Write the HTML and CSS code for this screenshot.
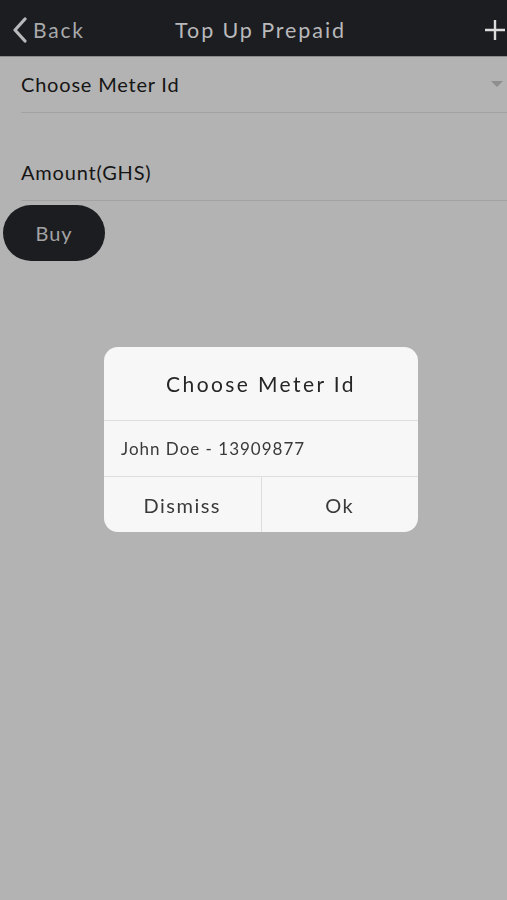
FILE: index.html
```html
<!DOCTYPE html>
<html lang="en">
<head>
  <meta charset="UTF-8">
  <meta name="viewport" content="width=device-width, initial-scale=1.0">
  <title>Top Up Prepaid</title>
  <link rel="stylesheet" href="styles.css">
</head>

<body>
  <header class="topbar">
    <div class="back">
      <svg width="16" height="26" viewBox="0 0 16 26"><path d="M13 2 L3 13 L13 24" fill="none" stroke="#b9b9bb" stroke-width="3.2" stroke-linecap="round" stroke-linejoin="round"/></svg>
      <span>Back</span>
    </div>
    <div class="title">Top Up Prepaid</div>
    <div class="plus">
      <svg width="22" height="22" viewBox="0 0 22 22"><path d="M11 1 V21 M1 11 H21" stroke="#dcdcdc" stroke-width="2.4"/></svg>
    </div>
  </header>

  <main class="form">
    <div class="field select">
      <span>Choose Meter Id</span>
      <span class="caret"></span>
    </div>
    <div class="field amount">
      <span>Amount(GHS)</span>
    </div>
    <button class="buy">Buy</button>
  </main>

  <div class="backdrop">
    <div class="dialog">
      <div class="dialog-title">Choose Meter Id</div>
      <div class="dialog-item">John Doe - 13909877</div>
      <div class="dialog-actions">
        <div class="action">Dismiss</div>
        <div class="action">Ok</div>
      </div>
    </div>
  </div>
</body>
</html>
```

FILE: styles.css
```css
body {
  margin: 0;
  background: #b3b3b3;
  font-family: Lato, "Open Sans", sans-serif;
  height: 900px;
  overflow: hidden;
}

.topbar {
  height: 57px;
  background: #1c1d21;
  border-bottom: 1px solid #8a8a8a;
  box-sizing: border-box;
  display: flex;
  align-items: center;
  padding: 0 0 0 12px;
}

.back {
  display: flex;
  align-items: center;
  gap: 5px;
  color: #a9a9ab;
  font-size: 21px;
  letter-spacing: 1.8px;
  width: 150px;
  padding-top: 3px;
}

.title {
  flex: 1;
  text-align: center;
  color: #b9b9bb;
  font-size: 21.5px;
  letter-spacing: 1.9px;
  padding-right: 123px;
  padding-top: 4px;
}

.plus {
  width: 24px;
  display: flex;
  justify-content: flex-end;
  margin-right: 1px;
  padding-top: 4px;
}

.form {
  padding-left: 21px;
}

.field {
  border-bottom: 1px solid #a2a2a2;
  display: flex;
  align-items: center;
  justify-content: space-between;
  font-size: 20px;
  color: #151515;
  letter-spacing: 0.8px;
  box-sizing: border-box;
}

.select {
  height: 56px;
  padding-bottom: 2px;
}

.amount {
  height: 88px;
  align-items: flex-end;
  padding-bottom: 16px;
}

.caret {
  width: 0;
  height: 0;
  border-left: 6px solid transparent;
  border-right: 6px solid transparent;
  border-top: 6px solid #8e8e8e;
  margin-right: 4px;
}

.buy {
  margin: 4px 0 0 -18px;
  width: 102px;
  height: 56px;
  border: none;
  border-radius: 28px;
  background: #1c1d21;
  color: #a3a3a5;
  font-family: Lato, "Open Sans", sans-serif;
  font-size: 20px;
  letter-spacing: 1px;
}

.backdrop {
  position: fixed;
  inset: 0;
  display: flex;
  justify-content: center;
  padding-top: 347px;
}

.dialog {
  width: 314px;
  height: 185px;
  background: #f7f7f7;
  border-radius: 14px;
  overflow: hidden;
  display: flex;
  flex-direction: column;
  margin-left: 15px;
}

.dialog-title {
  height: 74px;
  border-bottom: 1px solid #dedede;
  display: flex;
  align-items: center;
  justify-content: center;
  font-size: 21px;
  letter-spacing: 2.4px;
  color: #262626;
  box-sizing: border-box;
  padding-bottom: 1px;
}

.dialog-item {
  height: 56px;
  border-bottom: 1px solid #dedede;
  display: flex;
  align-items: center;
  padding-left: 17px;
  font-size: 17px;
  letter-spacing: 1px;
  color: #3a3a3a;
  box-sizing: border-box;
}

.dialog-actions {
  flex: 1;
  display: flex;
}

.action {
  flex: 1;
  display: flex;
  align-items: center;
  justify-content: center;
  font-size: 20px;
  letter-spacing: 1.5px;
  color: #3a3a3a;
}

.action + .action {
  border-left: 1px solid #dedede;
}
```
